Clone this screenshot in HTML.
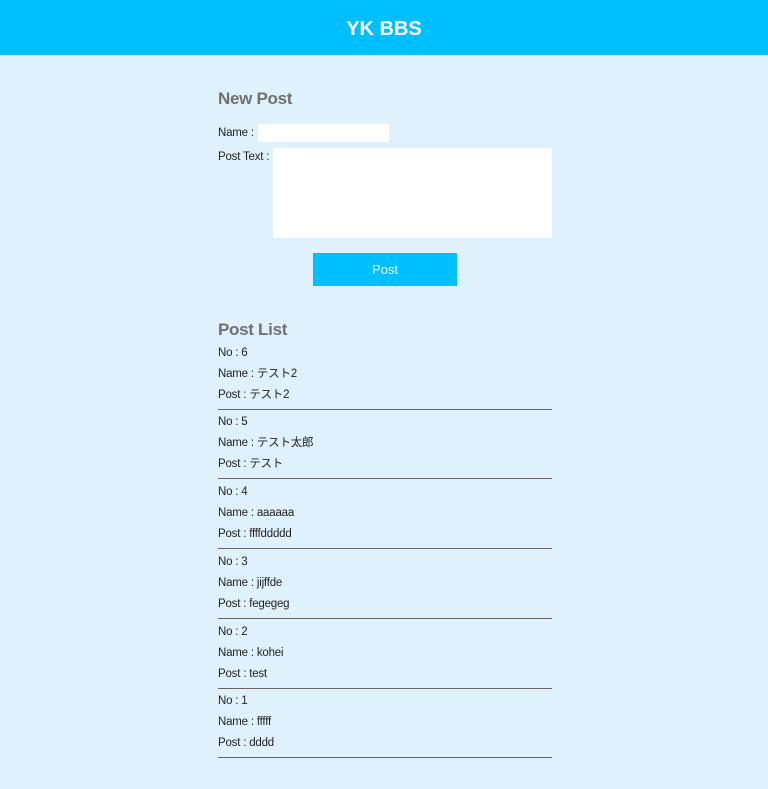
<!DOCTYPE html>
<html><head><meta charset="utf-8"><style>
body{margin:0;width:768px;height:789px;background:#dff1fd;font-family:"Liberation Sans","Noto Sans CJK JP",sans-serif;position:relative;overflow:hidden;color:#222}
.hd{position:absolute;left:0;top:0;width:768px;height:55px;background:#00bfff;color:#fff;font-weight:bold;font-size:20px;text-align:center;line-height:58px}
.h{position:absolute;left:218px;color:#707070;font-weight:bold;font-size:17px;letter-spacing:-0.3px}
.lbl{position:absolute;left:218px;font-size:11.5px;letter-spacing:-0.2px}
.box{position:absolute;background:#fff}
.btn{position:absolute;left:313px;top:253px;width:144px;height:33px;background:#00bfff;color:#fff;font-size:13px;text-align:center;line-height:34px}
.p{position:absolute;left:218px;width:334px;height:66px;border-bottom:1px solid #666;font-size:11.5px;line-height:21px;letter-spacing:-0.2px}
</style></head><body>
<div class="hd">YK BBS</div>
<div class="h" style="top:89px">New Post</div>
<div class="lbl" style="top:127px">Name :</div>
<div class="box" style="left:258px;top:124px;width:131px;height:18px"></div>
<div class="lbl" style="top:151px">Post Text :</div>
<div class="box" style="left:273px;top:148px;width:279px;height:90px"></div>
<div class="btn">Post</div>
<div class="h" style="top:320px">Post List</div>
<div class="p" style="top:343px">No : 6<br>Name : テスト2<br>Post : テスト2</div>
<div class="p" style="top:412px">No : 5<br>Name : テスト太郎<br>Post : テスト</div>
<div class="p" style="top:482px">No : 4<br>Name : aaaaaa<br>Post : ffffddddd</div>
<div class="p" style="top:552px">No : 3<br>Name : jijffde<br>Post : fegegeg</div>
<div class="p" style="top:622px">No : 2<br>Name : kohei<br>Post : test</div>
<div class="p" style="top:691px">No : 1<br>Name : fffff<br>Post : dddd</div>
</body></html>
